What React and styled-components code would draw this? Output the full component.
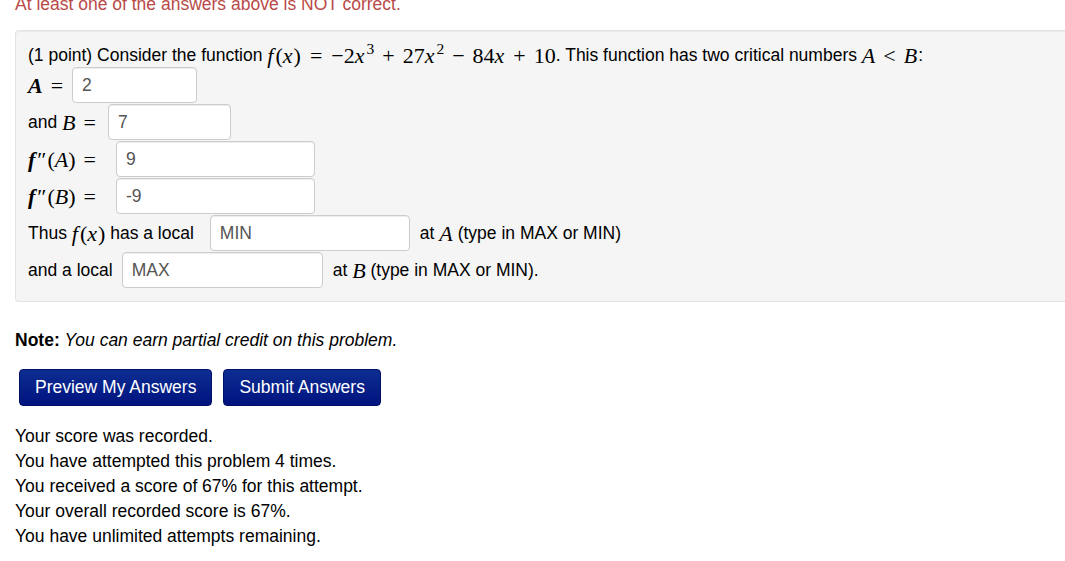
import styled, { createGlobalStyle } from "styled-components";

const GlobalStyle = createGlobalStyle`
  html, body {
    margin: 0;
    padding: 0;
    background: #ffffff;
    overflow: hidden;
  }
  body {
    font-family: "Liberation Sans", Arial, sans-serif;
    font-size: 17.5px;
    line-height: 25px;
    color: #000000;
  }
`;

const Page = styled.div`
  padding-left: 15px;
  width: 1080px;
`;

const ErrorLine = styled.div`
  color: #b94a48;
  margin-top: -8px;
  height: 25px;
`;

const Well = styled.div`
  margin-top: 13px;
  background: #f5f5f5;
  border: 1px solid #e3e3e3;
  border-right: none;
  border-radius: 4px 0 0 4px;
  padding: 12px 12px 12px 12px;
  box-shadow: inset 0 1px 1px rgba(0, 0, 0, 0.05);
`;

const Line = styled.div`
  display: flex;
  align-items: center;
  white-space: pre;
  height: 24px;
`;

const Row = styled.div`
  display: flex;
  align-items: center;
  white-space: pre;
  margin-bottom: 1px;
`;

const M = styled.span`
  font-family: "Liberation Serif", "DejaVu Serif", serif;
  font-size: 22px;
  font-style: ${(p) => (p.$up ? "normal" : "italic")};
  font-weight: ${(p) => (p.$bold ? 700 : 400)};
  margin-right: ${(p) => p.$ic || 0}px;
`;

const Op = styled.span`
  font-family: "Liberation Serif", "DejaVu Serif", serif;
  font-size: 22px;
  font-style: normal;
  padding: 0 ${(p) => p.$pad || 8}px;
`;

const Sup = styled.span`
  font-family: "Liberation Serif", "DejaVu Serif", serif;
  font-size: 15.5px;
  line-height: 1;
  position: relative;
  top: -6px;
  margin-left: 1px;
`;

const Answer = styled.input`
  box-sizing: border-box;
  width: ${(p) => p.$w}px;
  height: 36px;
  margin: 0 ${(p) => p.$after || 0}px 0 ${(p) => p.$before || 0}px;
  padding: 0 9px;
  border: 1px solid #cccccc;
  border-radius: 4px;
  background: #ffffff;
  box-shadow: inset 0 1px 1px rgba(0, 0, 0, 0.075);
  font-family: "Liberation Sans", Arial, sans-serif;
  font-size: 17.5px;
  color: #555555;
  outline: none;
`;

const Note = styled.p`
  margin: 26px 0 0 0;
  height: 25px;

  strong {
    font-weight: 700;
  }
  em {
    font-style: italic;
  }
`;

const Buttons = styled.div`
  display: flex;
  gap: 11px;
  margin: 16px 0 0 4px;
`;

const Button = styled.button`
  height: 37px;
  padding: 0 15px;
  border: 1px solid #001066;
  border-radius: 4px;
  background: linear-gradient(to bottom, #0d2d92, #00137f);
  color: #ffffff;
  font-family: "Liberation Sans", Arial, sans-serif;
  font-size: 17.5px;
  cursor: pointer;
`;

const Score = styled.div`
  margin-top: 18px;

  div {
    height: 25px;
  }
`;

export default function App() {
  return (
    <>
      <GlobalStyle />
      <Page>
        <ErrorLine>At least one of the answers above is NOT correct.</ErrorLine>
        <Well>
          <Line>
            (1 point) Consider the function{" "}
            <M $ic={2}>f</M>
            <M $up>(</M>
            <M $ic={1}>x</M>
            <M $up>)</M>
            <Op $pad={9}>=</Op>
            <M $up>−2</M>
            <M $ic={1}>x</M>
            <Sup>3</Sup>
            <Op>+</Op>
            <M $up>27</M>
            <M $ic={1}>x</M>
            <Sup>2</Sup>
            <Op>−</Op>
            <M $up>84</M>
            <M $ic={1}>x</M>
            <Op>+</Op>
            <M $up>10</M>. This function has two critical numbers{" "}
            <M>A</M>
            <Op>&lt;</Op>
            <M $ic={1}>B</M>:
          </Line>
          <Row>
            <M $bold>A</M>
            <Op>=</Op>
            <Answer $w={125} defaultValue="2" $before={1} />
          </Row>
          <Row>
            and <M>B</M>
            <Op>=</Op>
            <Answer $w={123} defaultValue="7" $before={4} />
          </Row>
          <Row>
            <M $bold $ic={2}>f</M>
            <M $up $ic={1}>″</M>
            <M $up>(</M>
            <M>A</M>
            <M $up>)</M>
            <Op>=</Op>
            <Answer $w={199} defaultValue="9" $before={12} />
          </Row>
          <Row>
            <M $bold $ic={2}>f</M>
            <M $up $ic={1}>″</M>
            <M $up>(</M>
            <M>B</M>
            <M $up>)</M>
            <Op>=</Op>
            <Answer $w={199} defaultValue="-9" $before={12} />
          </Row>
          <Row>
            Thus <M $ic={2}>f</M>
            <M $up>(</M>
            <M $ic={1}>x</M>
            <M $up>)</M> has a local
            <Answer $w={200} defaultValue="MIN" $before={16} $after={10} />
            at <M>A</M> (type in MAX or MIN)
          </Row>
          <Row>
            and a local
            <Answer $w={201} defaultValue="MAX" $before={9} $after={10} />
            at <M>B</M> (type in MAX or MIN).
          </Row>
        </Well>
        <Note>
          <strong>Note:</strong> <em>You can earn partial credit on this problem.</em>
        </Note>
        <Buttons>
          <Button>Preview My Answers</Button>
          <Button>Submit Answers</Button>
        </Buttons>
        <Score>
          <div>Your score was recorded.</div>
          <div>You have attempted this problem 4 times.</div>
          <div>You received a score of 67% for this attempt.</div>
          <div>Your overall recorded score is 67%.</div>
          <div>You have unlimited attempts remaining.</div>
        </Score>
      </Page>
    </>
  );
}
